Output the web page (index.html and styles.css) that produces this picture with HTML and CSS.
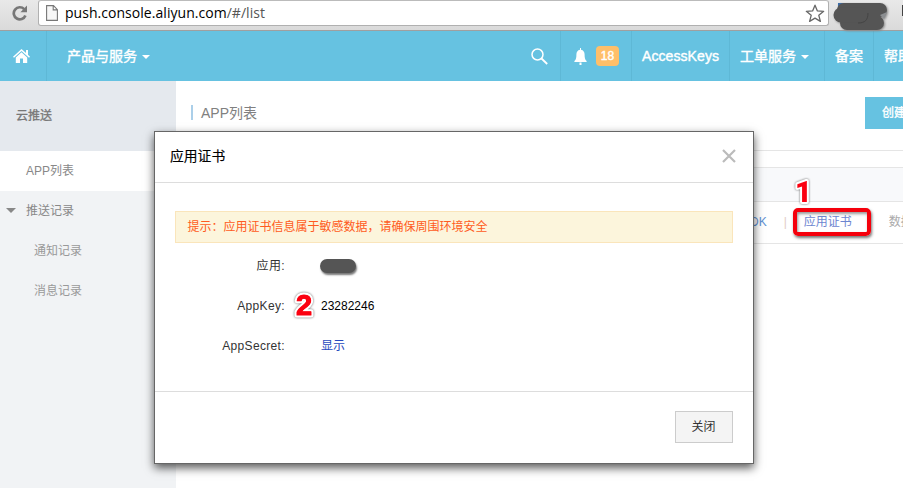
FILE: index.html
```html
<!DOCTYPE html>
<html lang="zh-CN">
<head>
<meta charset="utf-8">
<title>应用证书</title>
<link rel="stylesheet" href="styles.css">
</head>
<body>
<div class="browser">
  <svg class="reload" width="16" height="16" viewBox="0 0 16 16"><path d="M13.4 10.4A6 6 0 1 1 12.2 4.2" fill="none" stroke="#777" stroke-width="2.7"/><path d="M15 .6V7.300H8.400Z" fill="#777"/></svg>
  <div class="address">
    <svg class="page-icon" width="12" height="16" viewBox="0 0 12 16"><path d="M.6.600h6.900l3.900 4v10.800H.6ZM7.200.6v4.300h4.200" fill="#f7f7f7" stroke="#777" stroke-width="1.100"/></svg>
    <span class="url">push.console.aliyun.com<span class="path">/#/list</span></span>
    <svg class="star" width="20" height="19" viewBox="0 0 20 19"><path d="m10 1.200 2.400 5.700 6.300.4-4.900 4 1.600 6.100L10 14.100l-5.400 3.300 1.600-6.100-4.900-4 6.300-.4Z" fill="#fff" stroke="#666" stroke-width="1.300" stroke-linejoin="round"/></svg>
  </div>
  <svg class="scribble" width="62" height="36" viewBox="0 0 62 36"><path d="M8 8V4h6" stroke="#3b6ca8" stroke-width="2" fill="none"/><path d="M13 10H49M16 23H46" stroke="#555" stroke-width="14" stroke-linecap="round"/><path d="m49 15 7-3-3 7Z" fill="#8b8e91"/><path d="M10 15H29" stroke="#555" stroke-width="15" stroke-linecap="round"/><path d="M27 23C34 23 37 20 37 13" stroke="#444" stroke-width="1" fill="none"/></svg>
  <i class="menu-edge"></i>
</div>
<header class="topbar">
  <a class="cell home"><svg width="17" height="14" viewBox="0 0 17 14"><path d="M8.500 0 13 4V1h2v4.800l2 1.900-1 1-7.500-6.800L1 8.700l-1-1Z" fill="#fff"/><path d="m8.500 3.300 5.700 5.200V14H10V9.500H7V14H2.800V8.500Z" fill="#fff"/></svg></a>
  <a class="products">产品与服务<i class="caret"></i></a>
  <a class="cell search"><svg width="17" height="17" viewBox="0 0 17 17"><circle cx="6.500" cy="6.500" r="5.500" fill="none" stroke="#fff" stroke-width="1.500"/><path d="m10.500 10.500 5.700 5.500" stroke="#fff" stroke-width="1.800"/></svg></a>
  <a class="cell bell"><svg width="13" height="17" viewBox="0 0 13 17"><path d="M6 0h1v1.700c2.500.5 3.600 2.300 3.600 4.800 0 3.500.4 5.200 2 6.500v1H.4v-1c1.600-1.300 2-3 2-6.500 0-2.500 1.100-4.300 3.600-4.800ZM5.500 14.500h2V17h-2Z" fill="#fff"/></svg><span class="badge">18</span></a>
  <a class="cell keys">AccessKeys</a>
  <a class="cell tickets">工单服务<i class="caret"></i></a>
  <a class="cell record">备案</a>
  <a class="help">帮助</a>
</header>
<div class="body">
  <nav class="sidebar">
    <h2>云推送</h2>
    <a class="item active">APP列表</a>
    <a class="item group"><i></i>推送记录</a>
    <a class="item sub">通知记录</a>
    <a class="item sub">消息记录</a>
  </nav>
  <main>
    <div class="heading"><h1>APP列表</h1><span class="create">创建</span></div>
    <div class="thead"></div>
    <div class="trow"><a>SDK</a><i>|</i><a class="cert">应用证书</a><span>数据</span></div>
  </main>
</div>
<section class="modal">
  <div class="modal-head"><h3>应用证书</h3><svg width="14" height="14" viewBox="0 0 14 14"><path d="m1 1 12 12M13 1 1 13" stroke="#bbb" stroke-width="2.200"/></svg></div>
  <div class="modal-body">
    <p class="notice">提示：应用证书信息属于敏感数据，请确保周围环境安全</p>
    <div class="field"><label>应用:</label><span class="redacted"></span></div>
    <div class="field"><label>AppKey:</label><span>23282246</span></div>
    <div class="field"><label>AppSecret:</label><a>显示</a></div>
  </div>
  <div class="modal-foot"><button>关闭</button></div>
</section>
<div class="highlight"></div>
<svg class="mark one" width="30" height="34"><text x="5" y="27">1</text></svg>
<svg class="mark two" width="30" height="34"><text class="halo" x="5" y="27">2</text><text class="digit" x="5" y="27">2</text></svg>
</body>
</html>
```
FILE: styles.css
```css
* { box-sizing: border-box; }
body { margin: 0; width: 903px; height: 488px; overflow: hidden; position: relative; background: #fff; font: 12px/20px "Liberation Sans", "Noto Sans CJK SC", sans-serif; color: #333; }
h1, h2, h3, p { margin: 0; }
svg { display: block; flex: none; }
.browser { display: flex; height: 31px; background: linear-gradient(#e9e9e9, #dadada); border-bottom: 1px solid #a09f9f; position: relative; }
.reload { margin: 5px 10px 0 12px; }
.address { width: 791px; height: 26px; display: flex; align-items: center; padding: 0 3px 0 7px; background: #fff; border: 1px solid #b0b0b0; border-top-color: #bbb; border-radius: 3px; }
.url { flex: 1; margin-left: 7px; font: 14px/24px "Open Sans", sans-serif; letter-spacing: .04px; color: #000; white-space: nowrap; }
.path { color: #555; }
.scribble { position: absolute; left: 831px; top: 0; z-index: 2; filter: drop-shadow(1px 1px 1px #888); }
.menu-edge { position: absolute; right: 0; top: 5px; width: 1px; height: 11px; background: #444; }
.topbar { display: flex; height: 50px; background: #66c2e1; color: #fff; font-size: 14px; -webkit-text-stroke: .4px #fff; overflow: hidden; }
.topbar a { display: flex; align-items: center; flex: none; white-space: nowrap; }
.topbar .cell { border-right: 1px solid #5eb8d6; }
.home { width: 47px; padding-left: 13px; }
.products { width: 465px; padding-left: 20px; }
.caret { border: 4px solid transparent; border-top: 4px solid #fff; border-bottom: 0; margin-left: 5px; margin-top: 2px; }
.search { width: 49px; padding-left: 19px; }
.bell { width: 71px; padding-left: 13px; }
.badge { width: 23px; height: 20px; margin-left: 9px; border-radius: 4px; background: #ffbf69; text-align: center; font: 12px/20px "Liberation Sans", sans-serif; }
.keys { width: 98px; padding-left: 10px; letter-spacing: .08px; }
.tickets { width: 95px; padding-left: 10px; }
.record { width: 49px; padding-left: 10px; }
.help { padding-left: 10px; }
.body { display: flex; height: 407px; }
.sidebar { width: 176px; background: #f1f3f5; color: #888; }
.sidebar h2 { height: 70px; padding-left: 16px; background: #e5e9ee; font-size: 12px; font-weight: normal; line-height: 70px; color: #777; -webkit-text-stroke: .3px; }
.item { display: flex; align-items: center; height: 40px; padding-left: 26px; }
.active { background: #fff; }
.group { padding-left: 6px; }
.group i { border: 5px solid transparent; border-top-color: #888; border-bottom: 0; margin: -2px 10px 0 0; }
.sub { padding-left: 34px; color: #999; }
main { flex: 1; min-width: 0; }
.heading { display: flex; justify-content: space-between; height: 70px; margin-left: 15px; padding-top: 16px; border-bottom: 1px solid #e5e5e5; }
.heading h1 { height: 15px; margin-top: 8px; padding-left: 8px; border-left: 2px solid #abcfe9; color: #808080; font-size: 14px; font-weight: normal; line-height: 16px; }
.create { width: 38px; height: 32px; padding-left: 17px; overflow: hidden; white-space: nowrap; background: #66c2e1; color: #fff; -webkit-text-stroke: .35px; line-height: 32px; }
.thead { height: 35px; margin: 16px 0 0 15px; border: 1px solid #e5e5e5; border-width: 1px 0; background: #f8f9fb; }
.trow { display: flex; height: 42px; margin-left: 15px; padding-left: 551px; align-items: flex-start; overflow: hidden; white-space: nowrap; border-bottom: 1px solid #e5e5e5; color: #999; line-height: 41px; }
.trow a { flex: none; color: #6292d3; }
.trow i { margin: 0 17px; font-style: normal; color: #e2ccc5; }
.trow .cert { color: #6c85d0; }
.trow span { flex: none; margin-left: 37px; color: #aaa; }
.modal { position: absolute; left: 154px; top: 131px; width: 600px; height: 333px; background: #fff; border: 1px solid #666; box-shadow: 0 4px 9px rgba(0,0,0,.65); }
.modal-head { display: flex; justify-content: space-between; align-items: center; height: 51px; padding: 0 17px 2px 15px; border-bottom: 1px solid #ddd; }
.modal-head h3 { padding-top: 1px; font-size: 13.8px; font-weight: normal; color: #000; -webkit-text-stroke: .15px; }
.modal-body { height: 209px; padding: 28px 20px 0; border-bottom: 1px solid #ddd; }
.notice { height: 32px; margin-bottom: 3px; padding-left: 11.5px; border: 1px solid #fae5bb; background: #fcf5dc; color: #ff5b21; line-height: 30px; }
.field { display: flex; height: 40px; align-items: center; color: #000; }
.field label { width: 110px; margin-right: 36px; text-align: right; letter-spacing: .35px; color: #333; }
.field a { color: #2748bd; }
.redacted { width: 36px; height: 14px; margin-left: -1px; border-radius: 7px; background: #555; box-shadow: 1px 2px 2px #777; }
.modal-foot { display: flex; justify-content: flex-end; padding: 19px 20px; }
.modal-foot button { width: 58px; height: 32px; padding: 0 1px 0 0; border: 1px solid #ccc; background: #f4f4f4; font: inherit; color: #333; }
.highlight { position: absolute; left: 793px; top: 208px; width: 78px; height: 28px; border: 4px solid #f5000c; border-radius: 5px; box-shadow: 1px 2px 3px #777, inset 1px 2px 3px #999; }
.mark { position: absolute; filter: drop-shadow(0 0 1px #666); overflow: visible; }
.mark text { font: bold 29px "Liberation Sans", sans-serif; fill: #fb0010; stroke: #fff; stroke-width: 4px; paint-order: stroke; stroke-linejoin: round; }
.mark.one text { font: 900 29px Roboto, sans-serif; }
.mark .halo { stroke-width: 5px; }
.mark .digit { stroke: #fb0010; stroke-width: 1px; }
.one { left: 790px; top: 175px; }
.two { left: 291px; top: 288px; }
```
